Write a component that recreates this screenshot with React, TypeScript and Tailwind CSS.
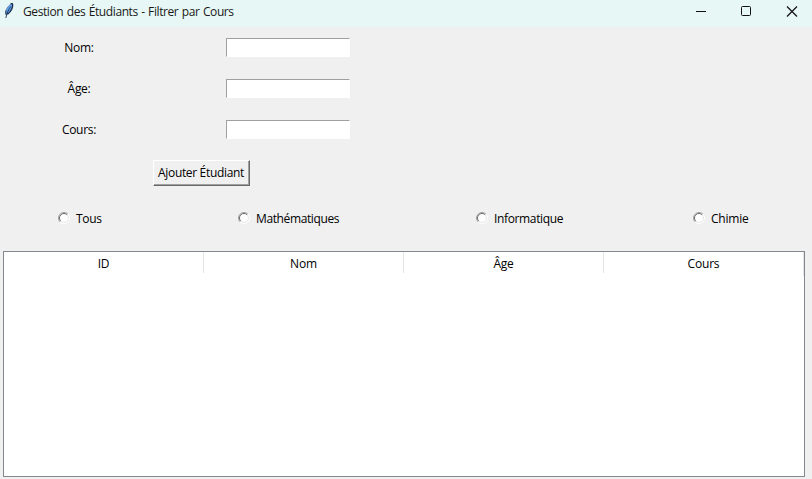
import React from "react";

const fields = ["Nom:", "Âge:", "Cours:"];

const filters = [
  { label: "Tous", cell: "w-[180px]", text: "tracking-[-0.3px]" },
  { label: "Mathématiques", cell: "w-[238px]", text: "tracking-[-0.38px]" },
  { label: "Informatique", cell: "w-[217px]", text: "tracking-[-0.36px]" },
  { label: "Chimie", cell: "", text: "tracking-[-0.2px]" },
];

const columns = [
  { label: "ID", divider: "h-[21px]" },
  { label: "Nom", divider: "h-[21px]" },
  { label: "Âge", divider: "h-[21px]" },
  { label: "Cours", divider: "h-[24px]" },
];

function Feather() {
  return (
    <svg width="11" height="16" viewBox="0 0 11 16" className="ml-1 block">
      <path d="M8 .8C5.500 1.500 2.500 4.500 1.800 8c-.4 1.900-.2 3.200.6 3.900C5 10.900 7.300 8.300 8.300 5.500 8.900 3.800 9.100 2 8 .8Z" fill="#5fa3f0" stroke="#6a7f9a" strokeWidth=".7" />
      <path d="M6.500.9Q8.300.1 8.600 1.200C9 3.300 7.500 8.300 3.500 11.300" fill="none" stroke="#1b2a42" strokeWidth="1.200" />
      <path d="M6.700 3.500C5 6 3 9.500 1.800 15" fill="none" stroke="#1c2f50" strokeWidth=".9" />
      <path d="M1.900 7.500v4" fill="none" stroke="#1b2a42" strokeWidth=".9" />
    </svg>
  );
}

function Radio() {
  return (
    <svg width="12" height="12" viewBox="0 0 12 12" className="block shrink-0">
      <circle cx="6" cy="6" r="5" fill="#fff" />
      <path d="M2.100 9.900A5.500 5.500 0 0 1 9.900 2.100" fill="none" stroke="#a0a0a0" />
      <path d="M2.800 9.200A4.500 4.500 0 0 1 9.200 2.800" fill="none" stroke="#696969" />
      <path d="M9.200 2.800A4.500 4.500 0 0 1 2.800 9.200" fill="none" stroke="#e3e3e3" />
      <path d="M9.900 2.100A5.500 5.500 0 0 1 2.100 9.900" fill="none" stroke="#fff" />
    </svg>
  );
}

export default function App() {
  return (
    <div className="flex h-[479px] w-[812px] flex-col overflow-hidden bg-[#f0f0f0] font-['Open_Sans','Noto_Sans',sans-serif] text-[12px] leading-4 text-black">
      <header className="flex h-[27px] shrink-0 items-start bg-[#e7f7f5]">
        <div className="pt-[3px]"><Feather /></div>
        <h1 className="ml-2 mt-1 whitespace-nowrap text-[12px] tracking-[-0.4px] [word-spacing:0.7px] text-[#191919]">
          Gestion des Étudiants - Filtrer par Cours
        </h1>
        <div className="ml-auto flex pr-[14px] pt-[6px]">
          <svg width="102" height="11" viewBox="0 0 102 11" fill="none" stroke="#111">
            <path d="M0 5.500h10" />
            <rect x="45.500" y=".5" width="9" height="9" rx="1" />
            <path d="m91 .5 10 10m0-10-10 10" strokeWidth="1.200" />
          </svg>
        </div>
      </header>

      <form className="shrink-0" onSubmit={(e) => e.preventDefault()}>
        {fields.map((label) => (
          <div key={label} className="flex h-[41px] items-center">
            <label className="ml-[39px] w-[80px] text-center tracking-[-0.3px]">{label}</label>
            <input
              aria-label={label}
              className="ml-[107px] h-[19px] w-[124px] border border-b-white border-l-[#a0a0a0] border-r-white border-t-[#a0a0a0] bg-white outline-none"
            />
          </div>
        ))}
        <button className="ml-[153px] mt-[10px] flex h-[26px] w-[97px] items-center justify-center border border-b-[#696969] border-l-white border-r-[#696969] border-t-white pr-px whitespace-nowrap tracking-[-0.33px] shadow-[inset_-1px_-1px_0_#a0a0a0]">
          Ajouter Étudiant
        </button>
      </form>

      <div className="mt-6 flex h-4 shrink-0 items-center">
        {filters.map((f) => (
          <label key={f.label} className={"flex items-center gap-[6px] pl-[58px] " + f.cell}>
            <Radio />
            <span className={"pt-[2px] " + f.text}>{f.label}</span>
          </label>
        ))}
      </div>

      <div className="ml-[3px] mt-[25px] h-[226px] w-[802px] shrink-0 border border-[#828790] bg-white">
        <div className="flex h-6 items-start">
          {columns.map((c) => (
            <div key={c.label} className={"flex w-[200px] items-start justify-center border-r border-[#e5e5e5] pt-1 tracking-[-0.2px] " + c.divider}>
              {c.label}
            </div>
          ))}
        </div>
      </div>
    </div>
  );
}
